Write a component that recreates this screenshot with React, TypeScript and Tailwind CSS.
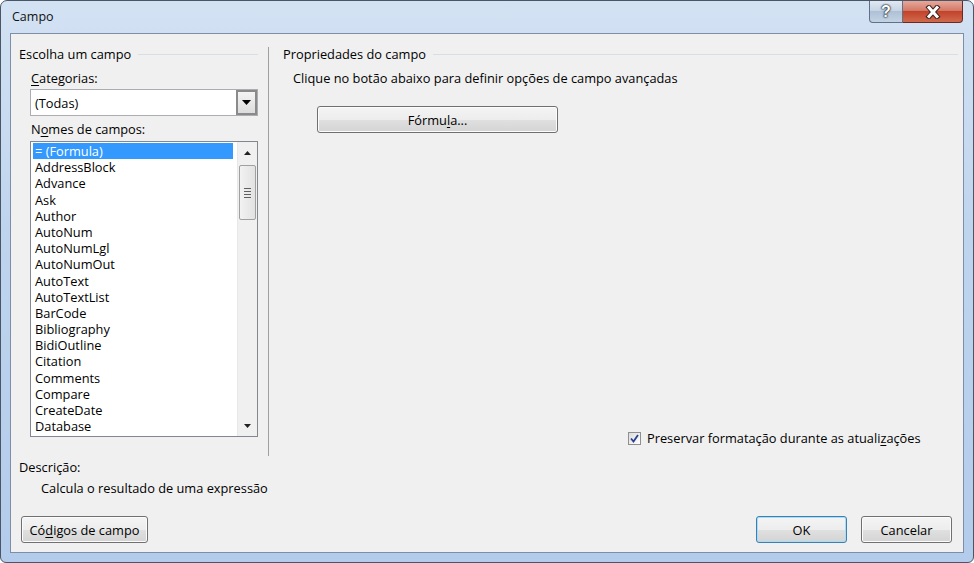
import React from 'react';

const fields = [
  '= (Formula)', 'AddressBlock', 'Advance', 'Ask', 'Author', 'AutoNum', 'AutoNumLgl', 'AutoNumOut',
  'AutoText', 'AutoTextList', 'BarCode', 'Bibliography', 'BidiOutline', 'Citation', 'Comments',
  'Compare', 'CreateDate', 'Database',
];

function Btn({ children, w, primary = false }: { children: React.ReactNode; w: string; primary?: boolean }) {
  return (
    <div
      className={`${w} h-[27px] rounded-[3px] border flex items-center justify-center ${
        primary ? 'border-[#3c7fb1] shadow-[inset_0_0_0_1px_#a8dcf7]' : 'border-[#707070] shadow-[inset_0_0_0_1px_#fcfcfc]'
      } bg-[linear-gradient(to_bottom,#f4f4f4_0%,#ededed_50%,#e0e0e0_51%,#d4d4d4_100%)]`}
    >
      {children}
    </div>
  );
}

export default function App() {
  return (
    <div className="w-[974px] h-[563px] bg-white font-['Open_Sans',sans-serif] text-[12.8px] leading-[16px] text-black">
      <div className="flex flex-col w-full h-full rounded-t-[7px] rounded-b-[6px] border border-[#4a5566] bg-[linear-gradient(to_bottom,#d3e2f3_0%,#bfd5ee_40%,#b3cceb_100%)] px-[9px] pb-[9px]">
        {/* Title bar */}
        <div className="h-[32px] flex items-start justify-between">
          <span className="pl-[2px] pt-[8px] text-[12.5px] text-[#111]">Campo</span>
          <div className="flex mr-[1px]">
            <div className="w-[34px] h-[22px] rounded-bl-[4px] border border-t-0 border-[#5f7189] bg-[linear-gradient(to_bottom,#e0e9f3_0%,#c8d5e4_45%,#afc1d6_50%,#c3d3e4_100%)] flex items-center justify-center">
              <span className="text-white font-bold text-[16px] leading-none font-['Liberation_Sans',sans-serif] [text-shadow:0_0_1px_#202a38,0_0_2px_#202a38,0_0_2px_#202a38]">?</span>
            </div>
            <div className="w-[60px] h-[22px] rounded-br-[4px] border border-t-0 border-l-0 border-[#6a2a22] bg-[linear-gradient(to_bottom,#e6a89b_0%,#d47a68_45%,#c2432c_50%,#d06a4c_100%)] flex items-center justify-center">
              <svg width="18" height="14" viewBox="0 0 18 14">
                <path d="M5 2.5 L13 11.5 M13 2.5 L5 11.5" stroke="#3a2420" strokeWidth="5" strokeLinecap="square" />
                <path d="M5 2.5 L13 11.5 M13 2.5 L5 11.5" stroke="#ffffff" strokeWidth="3" strokeLinecap="square" />
              </svg>
            </div>
          </div>
        </div>

        {/* Client area */}
        <div className="flex-1 border border-[#7d8fa6] bg-[#f0f0f0] flex flex-col">
          <div className="flex h-[422px]">
            {/* Left column */}
            <div className="w-[257px] flex flex-col pt-[12px]">
              <div className="flex items-center pl-[8px] pr-[10px]">
                <span>Escolha um campo</span>
                <div className="flex-1 h-px bg-[#d5dfe5] ml-[7px]" />
              </div>
              <div className="pl-[20px] mt-[8px]">
                <span className="underline underline-offset-2">C</span>ategorias:
              </div>
              <div className="ml-[19px] mt-[3px] w-[228px] h-[27px] border border-[#abadb3] bg-white flex items-center">
                <span className="flex-1 pl-[4px]">(Todas)</span>
                <div className="w-[21px] h-[25px] border-2 border-[#8a8a8a] bg-[linear-gradient(to_bottom,#f4f4f4,#dcdcdc)] flex items-center justify-center">
                  <svg width="9" height="5" viewBox="0 0 9 5"><path d="M0 0 H9 L4.5 5 Z" fill="#000" /></svg>
                </div>
              </div>
              <div className="pl-[20px] mt-[5px]">
                N<span className="underline underline-offset-2">o</span>mes de campos:
              </div>
              <div className="ml-[19px] mt-[4px] w-[228px] h-[296px] border border-[#828790] bg-white flex">
                <div className="flex-1 pl-[2px] pt-[1px] overflow-hidden">
                  {fields.map((f, i) => (
                    <div
                      key={f}
                      className={`h-[16.2px] leading-[16px] pl-[2px] w-[200px] ${i === 0 ? 'bg-[#3399ff] text-white' : ''}`}
                    >
                      {f}
                    </div>
                  ))}
                </div>
                <div className="w-[20px] bg-[#f0f0f0] border-l border-[#e8e8e8] flex flex-col items-center">
                  <div className="h-[21px] flex items-center justify-center">
                    <svg width="7" height="4" viewBox="0 0 7 4"><path d="M0 4 H7 L3.5 0 Z" fill="#222" /></svg>
                  </div>
                  <div className="w-[17px] h-[55px] mt-[2px] rounded-[2px] border border-[#a0a0a0] bg-[linear-gradient(to_right,#f2f2f2,#e2e2e2)] flex flex-col items-center justify-center gap-[2px]">
                    <div className="w-[7px] h-px bg-[#606060]" />
                    <div className="w-[7px] h-px bg-[#606060]" />
                    <div className="w-[7px] h-px bg-[#606060]" />
                    <div className="w-[7px] h-px bg-[#606060]" />
                  </div>
                  <div className="flex-1" />
                  <div className="h-[21px] flex items-center justify-center">
                    <svg width="7" height="4" viewBox="0 0 7 4"><path d="M0 0 H7 L3.5 4 Z" fill="#222" /></svg>
                  </div>
                </div>
              </div>
            </div>

            {/* Separator */}
            <div className="w-px bg-[#a0a0a0] mt-[13px]" />

            {/* Right column */}
            <div className="flex-1 flex flex-col pt-[12px]">
              <div className="flex items-center pl-[14px] pr-[5px]">
                <span>Propriedades do campo</span>
                <div className="flex-1 h-px bg-[#d5dfe5] ml-[7px]" />
              </div>
              <div className="pl-[24px] mt-[8px]">Clique no botão abaixo para definir opções de campo avançadas</div>
              <div className="ml-[48px] mt-[20px]">
                <Btn w="w-[241px]">
                  <span>
                    Fórmu<span className="underline underline-offset-2">l</span>a...
                  </span>
                </Btn>
              </div>
              <div className="flex-1" />
              <div className="flex items-center pl-[359px] pb-[10px]">
                <div className="w-[13px] h-[13px] border border-[#8f8f8f] bg-[linear-gradient(135deg,#dcdcdc,#ffffff)] flex items-center justify-center">
                  <svg width="11" height="11" viewBox="0 0 11 11">
                    <path d="M2 5.5 L4.5 8.5 L9 2" stroke="#2a3f8f" strokeWidth="1.8" fill="none" />
                  </svg>
                </div>
                <span className="ml-[6px]">
                  Preservar formatação durante as atuali<span className="underline underline-offset-2">z</span>ações
                </span>
              </div>
            </div>
          </div>

          {/* Bottom */}
          <div className="flex-1 flex flex-col pt-[3px]">
            <div className="pl-[8px]">Descrição:</div>
            <div className="pl-[30px] mt-[5px]">Calcula o resultado de uma expressão</div>
            <div className="mt-auto flex items-center pb-[9px] pl-[10px] pr-[11px]">
              <Btn w="w-[127px]">
                <span>
                  Có<span className="underline underline-offset-2">d</span>igos de campo
                </span>
              </Btn>
              <div className="flex-1" />
              <Btn w="w-[91px]" primary>
                OK
              </Btn>
              <div className="w-[14px]" />
              <Btn w="w-[91px]">Cancelar</Btn>
            </div>
          </div>
        </div>
      </div>
    </div>
  );
}
